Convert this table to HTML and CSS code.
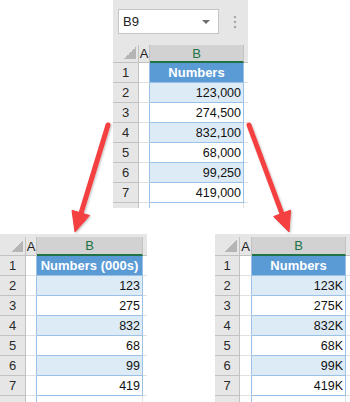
FILE: index.html
```html
<!DOCTYPE html>
<html>
<head>
<meta charset="utf-8">
<link rel="stylesheet" href="styles.css">
</head>
<body>
<div class="page">
  <div class="top-row">
    <div class="panel panel-top">
      <div class="namebar">
        <div class="namebox"><span>B9</span><span class="caret"></span></div>
        <svg class="dots" width="4" height="14" viewBox="0 0 4 14"><circle cx="2" cy="2" r="1.3"/><circle cx="2" cy="7" r="1.3"/><circle cx="2" cy="12" r="1.3"/></svg>
      </div>
      <div class="sheet sheet-top">
        <div class="row head"><div class="rh corner"></div><div class="ch a">A</div><div class="ch b sel">B</div><div class="ch c"></div></div>
        <div class="row"><div class="rh">1</div><div class="a"></div><div class="b title">Numbers</div><div class="c"></div></div>
        <div class="row even"><div class="rh">2</div><div class="a"></div><div class="b">123,000</div><div class="c"></div></div>
        <div class="row"><div class="rh">3</div><div class="a"></div><div class="b">274,500</div><div class="c"></div></div>
        <div class="row even"><div class="rh">4</div><div class="a"></div><div class="b">832,100</div><div class="c"></div></div>
        <div class="row"><div class="rh">5</div><div class="a"></div><div class="b">68,000</div><div class="c"></div></div>
        <div class="row even"><div class="rh">6</div><div class="a"></div><div class="b">99,250</div><div class="c"></div></div>
        <div class="row"><div class="rh">7</div><div class="a"></div><div class="b">419,000</div><div class="c"></div></div>
        <div class="row blank"><div class="rh"></div><div class="a"></div><div class="b"></div><div class="c"></div></div>
      </div>
    </div>
  </div>
  <div class="bottom-row">
    <div class="panel panel-bottom panel-left">
      <div class="sheet sheet-left">
        <div class="row head"><div class="rh corner"></div><div class="ch a">A</div><div class="ch b sel">B</div><div class="ch c"></div></div>
        <div class="row"><div class="rh">1</div><div class="a"></div><div class="b title">Numbers (000s)</div><div class="c"></div></div>
        <div class="row even"><div class="rh">2</div><div class="a"></div><div class="b">123</div><div class="c"></div></div>
        <div class="row"><div class="rh">3</div><div class="a"></div><div class="b">275</div><div class="c"></div></div>
        <div class="row even"><div class="rh">4</div><div class="a"></div><div class="b">832</div><div class="c"></div></div>
        <div class="row"><div class="rh">5</div><div class="a"></div><div class="b">68</div><div class="c"></div></div>
        <div class="row even"><div class="rh">6</div><div class="a"></div><div class="b">99</div><div class="c"></div></div>
        <div class="row"><div class="rh">7</div><div class="a"></div><div class="b">419</div><div class="c"></div></div>
        <div class="row blank"><div class="rh"></div><div class="a"></div><div class="b"></div><div class="c"></div></div>
      </div>
    </div>
    <div class="panel panel-bottom panel-right">
      <div class="sheet sheet-right">
        <div class="row head"><div class="rh corner"></div><div class="ch a">A</div><div class="ch b sel">B</div><div class="ch c"></div></div>
        <div class="row"><div class="rh">1</div><div class="a"></div><div class="b title">Numbers</div><div class="c"></div></div>
        <div class="row even"><div class="rh">2</div><div class="a"></div><div class="b">123K</div><div class="c"></div></div>
        <div class="row"><div class="rh">3</div><div class="a"></div><div class="b">275K</div><div class="c"></div></div>
        <div class="row even"><div class="rh">4</div><div class="a"></div><div class="b">832K</div><div class="c"></div></div>
        <div class="row"><div class="rh">5</div><div class="a"></div><div class="b">68K</div><div class="c"></div></div>
        <div class="row even"><div class="rh">6</div><div class="a"></div><div class="b">99K</div><div class="c"></div></div>
        <div class="row"><div class="rh">7</div><div class="a"></div><div class="b">419K</div><div class="c"></div></div>
        <div class="row blank"><div class="rh"></div><div class="a"></div><div class="b"></div><div class="c"></div></div>
      </div>
    </div>
  </div>
</div>
<svg class="arrows" width="350" height="402" viewBox="0 0 350 402">
  <defs>
    <filter id="sh" x="-20%" y="-20%" width="140%" height="140%">
      <feDropShadow dx="1" dy="1" stdDeviation="1.2" flood-color="#000" flood-opacity="0.25"/>
    </filter>
  </defs>
  <g filter="url(#sh)" fill="#f43f3f" stroke="#f43f3f">
    <line x1="108" y1="125" x2="80.8" y2="214" stroke-width="5" stroke-linecap="round"/>
    <polygon points="75,232 89.6,215.5 72,210.3" stroke-width="1" stroke-linejoin="round"/>
    <line x1="249" y1="125" x2="282.1" y2="214" stroke-width="5" stroke-linecap="round"/>
    <polygon points="289,232 290.6,210.1 273.6,216.6" stroke-width="1" stroke-linejoin="round"/>
  </g>
</svg>
</body>
</html>
```

FILE: styles.css
```css
* { box-sizing: border-box; }
html, body { margin: 0; padding: 0; }
body {
  width: 350px;
  height: 402px;
  background: #ffffff;
  font-family: "Liberation Sans", Arial, sans-serif;
  position: relative;
  overflow: hidden;
}
.page { display: flex; flex-direction: column; }
.top-row { display: flex; padding-left: 113px; }
.bottom-row { display: flex; justify-content: space-between; margin-top: 26px; }

.panel { background: #e6e6e6; overflow: hidden; }
.panel-top { width: 135px; height: 208px; }
.panel-bottom { height: 168px; padding-top: 3px; }
.panel-left { width: 147px; }
.panel-right { width: 135px; }

.namebar {
  height: 45px;
  display: flex;
  align-items: flex-start;
  padding: 9px 0 0 5px;
}
.namebox {
  width: 101px;
  height: 25px;
  background: #fff;
  border: 1px solid #c6c6c6;
  display: flex;
  align-items: center;
  justify-content: space-between;
  padding: 0 8px 0 4px;
  font-size: 13px;
  color: #222;
}
.caret {
  width: 0; height: 0;
  border-left: 4px solid transparent;
  border-right: 4px solid transparent;
  border-top: 4px solid #6f6f6f;
}
.dots { margin: 6px 0 0 14px; fill: #a9a9a9; }

.sheet-top { --rh: 26px; --a: 11px; --b: 94px; }
.sheet-left { --rh: 26px; --a: 11px; --b: 106px; }
.sheet-right { --rh: 25px; --a: 12px; --b: 94px; }

.row { display: flex; height: 20px; }
.row.head { height: 18px; }
.sheet-left .row.head, .sheet-right .row.head { height: 19px; }

.rh {
  width: var(--rh);
  flex: none;
  background: #e6e6e6;
  border-right: 1px solid #c2c2c2;
  border-bottom: 1px solid #c2c2c2;
  display: flex;
  align-items: center;
  justify-content: center;
  font-size: 13px;
  color: #2a2a2a;
}
.corner {
  background: linear-gradient(to bottom right, transparent 50%, #b5b5b5 50%) no-repeat right 2px bottom 3px / 12px 12px, #e6e6e6;
}
.a {
  width: var(--a);
  flex: none;
  background: #fff;
  border-right: 1px solid #9bc2e6;
  border-bottom: 1px solid #e0e0e0;
}
.b {
  width: var(--b);
  flex: none;
  background: #fff;
  border-right: 1px solid #9bc2e6;
  border-bottom: 1px solid #9bc2e6;
  display: flex;
  align-items: center;
  justify-content: flex-end;
  padding-right: 2px;
  font-size: 12.5px;
  color: #111;
}
.c {
  flex: 1;
  background: #fff;
  border-bottom: 1px solid #e0e0e0;
}
.row.even .b { background: #ddebf7; }
.b.title {
  background: #5b9bd5;
  color: #fff;
  font-weight: bold;
  font-size: 13px;
  justify-content: center;
  padding: 0;
}
.row.blank .b { border-color: #e0e0e0; border-bottom: none; }
.row.blank .a { border-right-color: #9bc2e6; }

.ch {
  background: #e6e6e6;
  border-right: 1px solid #c2c2c2;
  border-bottom: 1px solid #c2c2c2;
  display: flex;
  align-items: center;
  justify-content: center;
  font-size: 13px;
  color: #222;
  padding: 0;
}
.ch.a { border-right-color: #c2c2c2; border-bottom-color: #c2c2c2; }
.ch.c { background: #e6e6e6; border-right: none; }
.ch.sel {
  background: #d2d2d2;
  color: #217346;
  border-bottom: 2px solid #217346;
  justify-content: center;
  font-size: 13px;
}

.arrows { position: absolute; left: 0; top: 0; pointer-events: none; }
```
